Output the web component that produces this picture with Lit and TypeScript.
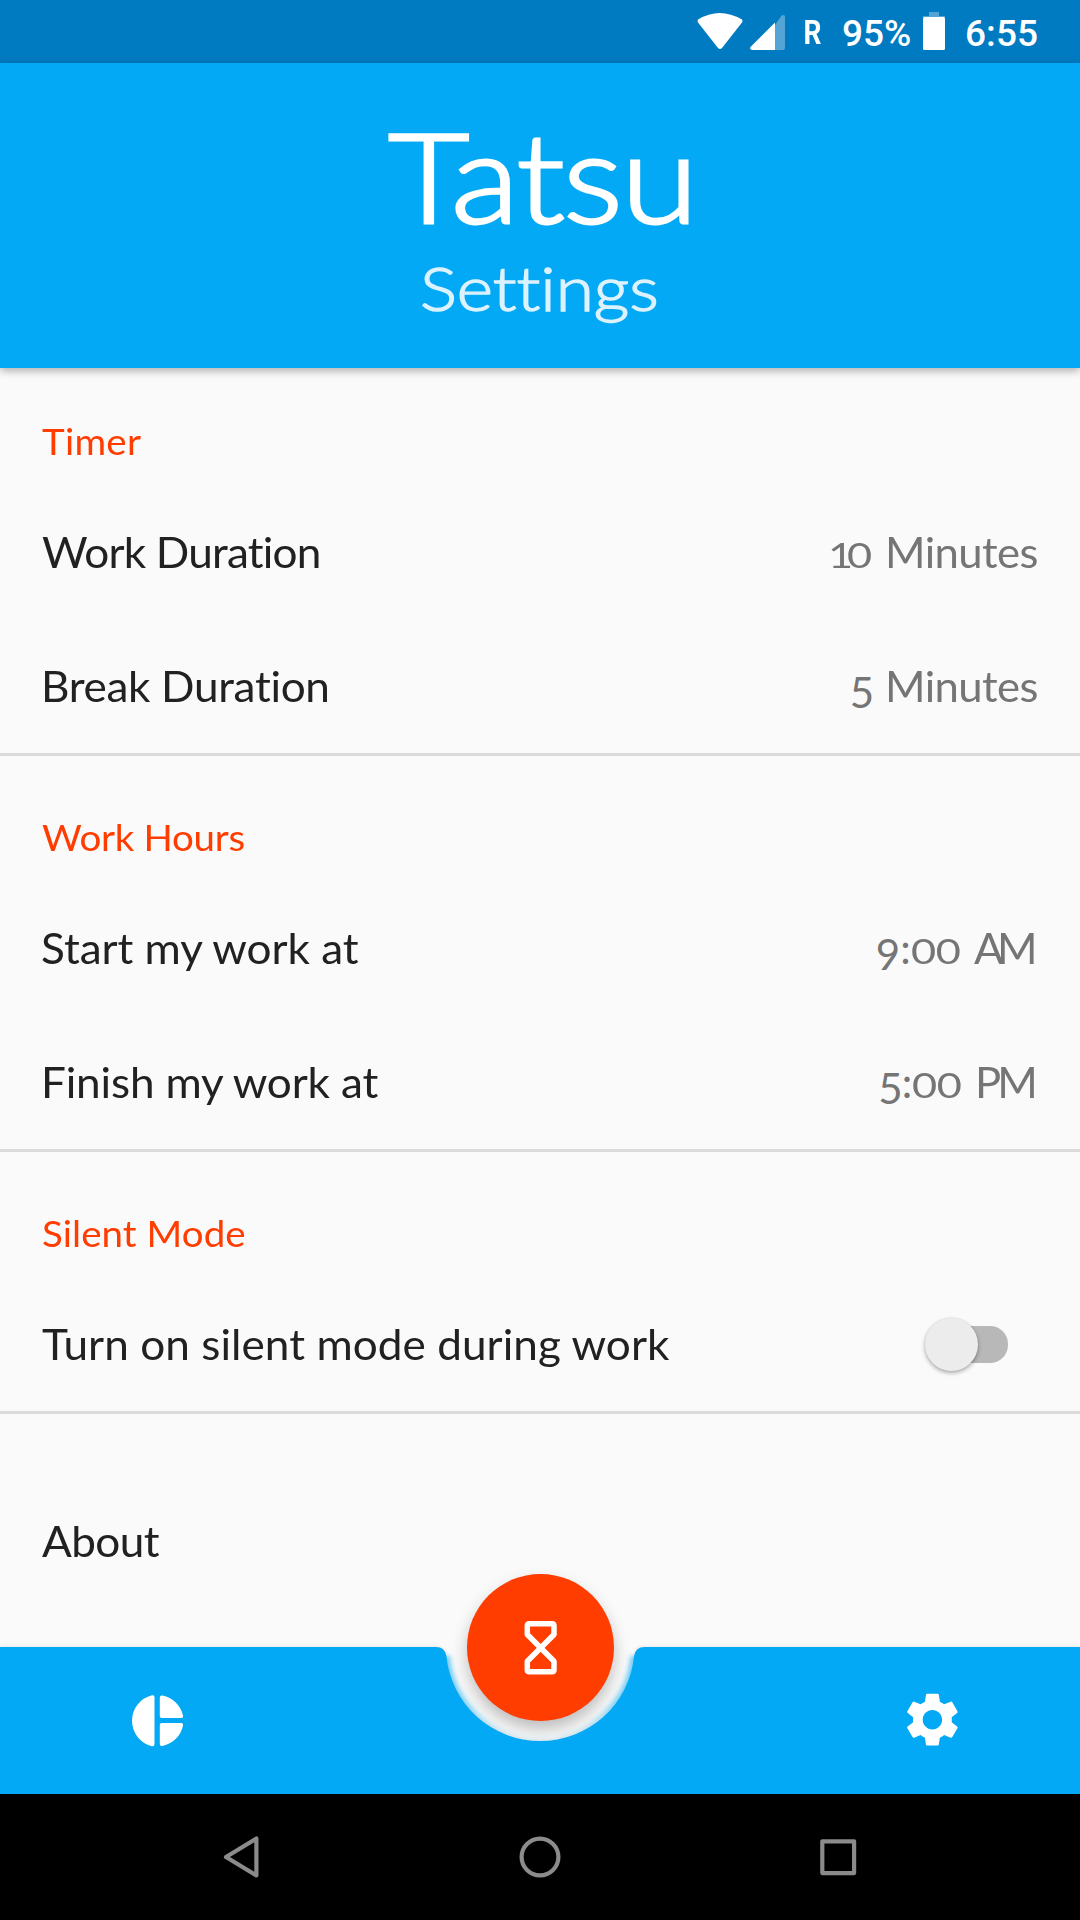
import { LitElement, html, css, svg, nothing } from "lit";
import { customElement, property } from "lit/decorators.js";

/** Text whose letters are spread so that its visible width equals `ink`. */
@customElement("fit-text")
class FitText extends LitElement {
  @property() text = "";
  @property({ type: Number }) ink = 0;
  @property({ type: Number }) inset = 0;
  /** Horizontal widening of the letters themselves. */
  @property({ type: Number }) stretch = 1;

  static styles = css`
    :host { display: inline-block; white-space: pre; transform-origin: 0 50%; }
  `;

  render() {
    return html`${this.text}`;
  }

  updated() {
    const ctx = document.createElement("canvas").getContext("2d")!;
    const s = getComputedStyle(this);
    ctx.font = `${s.fontWeight} ${s.fontSize} ${s.fontFamily}`;
    const m = ctx.measureText(this.text);
    const natural = m.actualBoundingBoxLeft + m.actualBoundingBoxRight;
    const gaps = this.text.length - 1;
    const k = this.stretch;
    const spacing = gaps > 0 ? (this.ink / k - natural) / gaps : 0;
    const width = m.width + spacing * (gaps + 1);
    const right = m.actualBoundingBoxRight + spacing * gaps;
    this.style.letterSpacing = `${spacing}px`;
    this.style.marginLeft = `${this.inset + m.actualBoundingBoxLeft * k}px`;
    this.style.marginRight = `${right * k - width}px`;
    this.style.transform = k === 1 ? "" : `scaleX(${k})`;
  }
}

interface Digit { text: string; ink: number; kind: string; gap: number; stretch?: number }
interface Row {
  label: string;
  ink: number;
  inset: number;
  digits?: Digit[];
  unit?: { text: string; ink: number; gap: number; end: number };
  toggle?: boolean;
}
interface Section { title: string; ink: number; inset: number; rows: Row[] }

const SECTIONS: Section[] = [
  {
    title: "Timer", ink: 99.5, inset: 0.3,
    rows: [
      {
        label: "Work Duration", ink: 277.5, inset: 0,
        digits: [{ text: "10", ink: 41, kind: "small", gap: 0, stretch: 1.22 }],
        unit: { text: "Minutes", ink: 149, gap: 16.5, end: 0.7 },
      },
      {
        label: "Break Duration", ink: 284, inset: 2.5,
        digits: [{ text: "5", ink: 20, kind: "low", gap: 0 }],
        unit: { text: "Minutes", ink: 149, gap: 16.5, end: 0.7 },
      },
    ],
  },
  {
    title: "Work Hours", ink: 202, inset: 0,
    rows: [
      {
        label: "Start my work at", ink: 318.5, inset: 0.5,
        digits: [
          { text: "9", ink: 21.5, kind: "low", gap: 0 },
          { text: ":", ink: 3, kind: "", gap: 4.5 },
          { text: "00", ink: 48, kind: "small", gap: 4, stretch: 1.22 },
        ],
        unit: { text: "AM", ink: 60.5, gap: 14, end: 3.3 },
      },
      {
        label: "Finish my work at", ink: 336, inset: 2.5,
        digits: [
          { text: "5", ink: 20, kind: "low", gap: 0 },
          { text: ":", ink: 3, kind: "", gap: 3.5 },
          { text: "00", ink: 48, kind: "small", gap: 4, stretch: 1.22 },
        ],
        unit: { text: "PM", ink: 56.5, gap: 16.5, end: 3.3 },
      },
    ],
  },
  {
    title: "Silent Mode", ink: 202, inset: 0.7,
    rows: [{ label: "Turn on silent mode during work", ink: 629, inset: 0, toggle: true }],
  },
];

@customElement("status-bar")
class StatusBar extends LitElement {
  static styles = css`
    :host {
      display: flex; align-items: flex-start; height: 63px; box-sizing: border-box;
      background: #007ac1; color: #fff; padding: 0 42px 0 697px;
      font: 500 37px/67px Roboto, sans-serif;
    }
    svg { display: block; flex: none; }
    .roaming {
      font-size: 33px; font-weight: 700; margin-left: 18px; width: 39px; line-height: 65px;
      transform: scaleX(.85); transform-origin: 2px 50%;
    }
    .percent { width: 80px; }
    .time { margin-left: 20px; }
  `;
  render() {
    return html`
      <svg width="89" height="63" viewBox="0 0 89 63">
        <path fill="#fff" d="M1 19.5Q22.5 6.5 45 19.5Q46.2 21 45 22.5L25 48Q23 50 21 48L1 22.5Q0 21 1 19.5Z"/>
        <path fill="#fff" opacity=".33" d="M78 25L84.500 15.500Q88 14 88 17V48Q88 50 86 50H78Z"/>
        <path fill="#fff" d="M78 22.500V50H55Q52.500 49.500 53.500 47Z"/>
      </svg>
      <span class="roaming"><fit-text text="R" .ink=${15} .inset=${1}></fit-text></span>
      <span class="percent"><fit-text text="95%" .ink=${67}></fit-text></span>
      <svg width="23" height="63" viewBox="0 0 23 63">
        <path fill="#fff" opacity=".33" d="M6 12H16V16H22V18H0V16H6Z"/>
        <rect fill="#fff" y="17" width="22" height="33" rx="1.500"/>
      </svg>
      <span class="time"><fit-text text="6:55" .ink=${70} .inset=${1}></fit-text></span>
    `;
  }
}

@customElement("app-header")
class AppHeader extends LitElement {
  static styles = css`
    :host {
      display: flex; flex-direction: column; align-items: center; height: 305px;
      box-sizing: border-box; padding-top: 37px; background: #03a9f4; color: #fff;
      box-shadow: 0 3px 8px rgba(0, 0, 0, .3); position: relative; z-index: 1;
    }
    .title {
      font-size: 123.500px; line-height: 150px; font-weight: 300; padding-right: 4px;
      -webkit-text-stroke: 2.800px #fff;
    }
    .subtitle {
      font-size: 62px; line-height: 75px; font-weight: 300; color: #dcf2fe; padding-right: 1px;
      -webkit-text-stroke: 1.400px #dcf2fe;
    }
  `;
  render() {
    return html`
      <div class="title"><fit-text text="Tatsu" .ink=${298} .stretch=${1.14}></fit-text></div>
      <div class="subtitle"><fit-text text="Settings" .ink=${232.5} .stretch=${1.12}></fit-text></div>
    `;
  }
}

@customElement("settings-row")
class SettingsRow extends LitElement {
  @property({ attribute: false }) row!: Row;

  static styles = css`
    :host {
      display: flex; align-items: center; justify-content: space-between;
      height: 134px; padding: 0 42px; box-sizing: border-box;
      color: #212121; font-size: 42px; line-height: 50px;
    }
    .value { color: #757575; white-space: pre; }
    .small { font-size: 35.500px; line-height: 0; }
    .low { line-height: 0; vertical-align: -6px; }
    .toggle {
      display: flex; align-items: center; width: 83px; height: 37px; margin: 0 30px 0 0;
      background: linear-gradient(90deg, transparent 20px, #b8b8b8 20px); border-radius: 0 18px 18px 0;
    }
    .toggle::before {
      content: ""; flex: none; width: 53px; height: 53px; border-radius: 50%; background: #ececec;
      box-shadow: 0 2px 4px rgba(0, 0, 0, .32), 0 0 2px rgba(0, 0, 0, .08);
    }
  `;
  render() {
    const { label, ink, inset, digits, unit, toggle } = this.row;
    return html`
      <span class="label"><fit-text .text=${label} .ink=${ink} .inset=${inset} .stretch=${1.05}></fit-text></span>
      ${unit
        ? html`<span class="value">${digits!.map(
            (d) => html`<fit-text class=${d.kind} .text=${d.text} .ink=${d.ink} .inset=${d.gap} .stretch=${d.stretch ?? 1}></fit-text>`
          )}<fit-text .text=${unit.text} .ink=${unit.ink} .inset=${unit.gap} .stretch=${1.04} style="padding-right:${unit.end}px"></fit-text></span>`
        : nothing}
      ${toggle ? html`<span class="toggle" role="switch" aria-checked="false"></span>` : nothing}
    `;
  }
}

@customElement("settings-list")
class SettingsList extends LitElement {
  static styles = css`
    :host { display: block; margin-top: -8px; height: 1287px; }
    .section { border-bottom: 3px solid #dbdbdb; }
    .title {
      height: 125px; box-sizing: border-box; padding: 59px 42px 0;
      color: #ff3d00; font-size: 37px; line-height: 44px;
    }
    .about { margin-top: 60px; }
  `;
  render() {
    return html`
      ${SECTIONS.map(
        (s) => html`<div class="section">
          <div class="title"><fit-text .text=${s.title} .ink=${s.ink} .inset=${s.inset} .stretch=${1.04}></fit-text></div>
          ${s.rows.map((r) => html`<settings-row .row=${r}></settings-row>`)}
        </div>`
      )}
      <settings-row class="about" .row=${{ label: "About", ink: 117.5, inset: 0.3 }}></settings-row>
    `;
  }
}

const BAR_PATH =
  "M0 0H436Q445 0 446.400 9A94.300 94.300 0 0 0 634.100 9Q635.500 0 644.500 0H1080V147H0Z";

@customElement("bottom-bar")
class BottomBar extends LitElement {
  static styles = css`
    :host { display: block; position: relative; height: 147px; }
    .shape { display: block; overflow: visible; }
    .fab {
      position: absolute; left: 467px; top: -73px; width: 147px; height: 147px; border-radius: 50%;
      background: #ff3d00;
    }
    .fab svg { display: block; }
  `;
  render() {
    return html`
      <svg class="shape" width="1080" height="147" viewBox="0 0 1080 147">
        <defs>
          <filter id="soft" x="-5%" y="-20%" width="110%" height="140%">
            <feGaussianBlur stdDeviation="2"/>
          </filter>
          <filter id="wide" x="-30%" y="-30%" width="160%" height="160%">
            <feGaussianBlur stdDeviation="9"/>
          </filter>
          <linearGradient id="fade" gradientUnits="userSpaceOnUse" x1="0" y1="0" x2="0" y2="94">
            <stop offset="0" stop-color="#03a9f4" stop-opacity=".5"/>
            <stop offset=".6" stop-color="#03a9f4" stop-opacity=".4"/>
            <stop offset="1" stop-color="#03a9f4" stop-opacity=".05"/>
          </linearGradient>
        </defs>
        <circle cx="540.500" cy="9" r="72" fill="#000" opacity=".28" filter="url(#wide)"/>
        <path d=${BAR_PATH} fill="#000" opacity=".1" filter="url(#soft)"/>
        <path d="M446.400 9A94.300 94.300 0 0 0 634.100 9" fill="none" stroke="url(#fade)" stroke-width="8" filter="url(#soft)"/>
        <path d=${BAR_PATH} fill="#03a9f4"/>
        ${svg`<g transform="translate(-.5 0)"><path fill="#fff" d="M153 48.300Q155 48 155 50V97Q155 99.500 152.500 99.200A26.200 26.200 0 0 1 152.500 48.300ZM160.300 50.500Q160.300 48 163 48.500A26.200 26.200 0 0 1 183.500 68.500Q184 71 181.500 71H162.300Q160.300 71 160.300 69ZM162.300 76H181.500Q184 76 183.500 78.500A26.200 26.200 0 0 1 163 99Q160.300 99.500 160.300 97V78Q160.300 76 162.300 76Z"/></g>
        <g transform="translate(900 40.300) scale(2.700)"><path fill="#fff" d="M19.140 12.940c.04-.3.060-.610.060-.940 0-.320-.02-.640-.07-.940l2.030-1.580c.180-.140.230-.410.120-.610l-1.920-3.320c-.120-.220-.370-.290-.590-.220l-2.390.960c-.5-.380-1.030-.7-1.620-.940l-.360-2.540c-.04-.240-.240-.410-.480-.410h-3.840c-.240 0-.430.170-.470.410l-.360 2.540c-.590.240-1.130.570-1.620.940l-2.390-.960c-.220-.080-.470 0-.590.220L2.740 8.870c-.120.210-.080.470.120.610l2.030 1.580c-.05.3-.09.630-.09.940s.02.640.07.940l-2.030 1.580c-.180.140-.230.410-.120.610l1.920 3.320c.120.220.370.290.590.220l2.390-.960c.5.380 1.030.7 1.620.940l.360 2.540c.05.240.240.410.480.410h3.840c.240 0 .440-.170.470-.410l.360-2.540c.590-.240 1.130-.560 1.620-.940l2.390.960c.220.080.470 0 .590-.220l1.920-3.320c.120-.220.070-.470-.120-.610l-2.010-1.580zM12 15.600c-1.980 0-3.600-1.620-3.600-3.600s1.620-3.600 3.600-3.600 3.600 1.620 3.600 3.600-1.620 3.600-3.600 3.600z"/></g>`}
      </svg>
      <div class="fab">
        <svg width="147" height="147" viewBox="0 0 147 147">
          <path fill="none" stroke="#fff" stroke-width="5.500" stroke-linejoin="round" d="M62.500 49.800H85Q87 49.800 87 51.800V60.500L60.300 87.200V95.800Q60.300 97.800 62.300 97.800H85Q87 97.800 87 95.800V87.200L60.300 60.500V51.800Q60.300 49.800 62.500 49.800Z"/>
        </svg>
      </div>
    `;
  }
}

@customElement("nav-bar")
class NavBar extends LitElement {
  static styles = css`
    :host { display: block; height: 126px; background: #000; }
    svg { display: block; }
  `;
  render() {
    return html`<svg width="1080" height="126" viewBox="0 0 1080 126" fill="none" stroke="#8b8b8b" stroke-width="4.200" stroke-linejoin="round">
      <path d="M256.400 44.500V81.500L226 63Z"/>
      <circle cx="540" cy="63" r="18.400"/>
      <rect x="822.300" y="47.300" width="31.800" height="31.800"/>
    </svg>`;
  }
}

@customElement("app-root")
class AppRoot extends LitElement {
  static styles = css`
    :host {
      display: flex; flex-direction: column; width: 1080px; height: 1920px; overflow: hidden;
      background: #fafafa; font-family: Lato, sans-serif;
    }
  `;
  render() {
    return html`
      <status-bar></status-bar>
      <app-header></app-header>
      <settings-list></settings-list>
      <bottom-bar></bottom-bar>
      <nav-bar></nav-bar>
    `;
  }
}
